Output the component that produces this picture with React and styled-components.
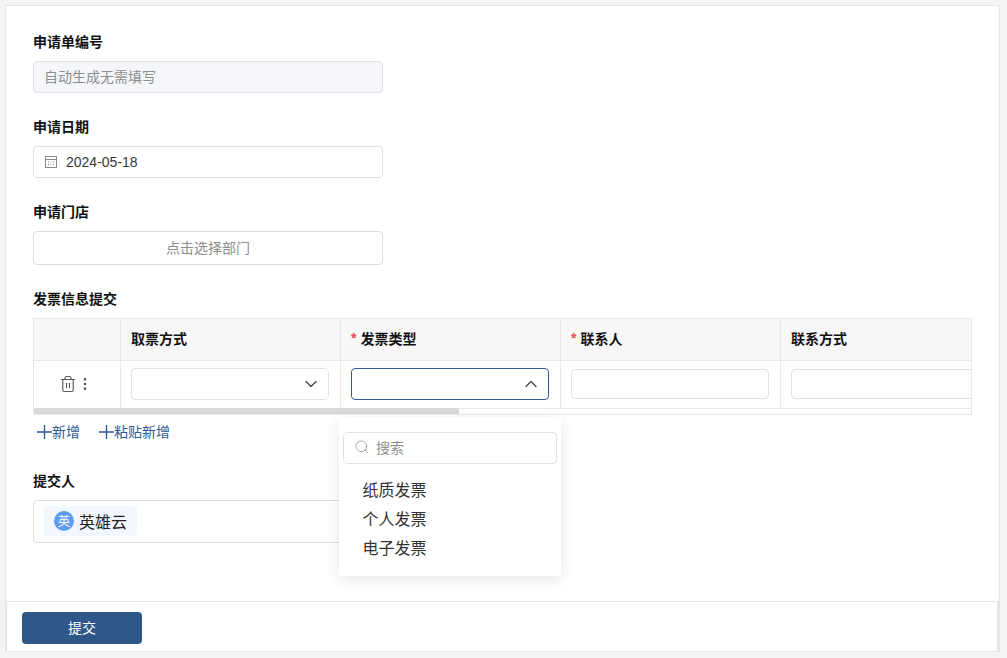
import React from "react";
import styled, { createGlobalStyle } from "styled-components";
import { Trash2, ChevronDown, ChevronUp, Search, EllipsisVertical } from "lucide-react";

const Global = createGlobalStyle`
  html, body { margin: 0; padding: 0; height: 100%; background: #f4f4f7; }
  body { font-family: "Liberation Sans", "Noto Sans CJK SC", sans-serif; color: #111; overflow: hidden; }
  * { box-sizing: border-box; }
`;
const Page = styled.div`
  width: 1007px; height: 658px; padding: 5px 7px 6px 5px;
`;
const Card = styled.div`
  position: relative; height: 647px; background: #fff; border: 1px solid #e6e6e8;
  display: flex; flex-direction: column;
`;
const Body = styled.div`
  flex: 1; padding: 26px 27px 0 27px; min-height: 0;
`;
const Field = styled.div`
  margin-bottom: ${p => p.$mb ?? 24}px;
`;
const Label = styled.div`
  font-size: 14px; font-weight: 600; line-height: 20px; margin-bottom: 9px; color: #111;
`;
const Input = styled.div`
  width: 350px; height: 32px; border: 1px solid #e0e0e8; border-radius: 4px;
  display: flex; align-items: center; padding: 0 10px; font-size: 14px;
  background: ${p => (p.$disabled ? "#f5f6fa" : "#fff")};
  color: ${p => (p.$disabled ? "#8e8e8e" : "#333")};
  ${p => p.$disabled && "padding-bottom: 2px;"}
`;
const DateText = styled.span` margin-left: 8px; color: #383838; `;
const PickButton = styled.div`
  width: 350px; height: 34px; border: 1px solid #dcdce0; border-radius: 4px; padding-bottom: 2px;
  display: flex; align-items: center; justify-content: center; font-size: 14px; color: #8c8c8c;
`;
const TableWrap = styled.div`
  width: 939px; height: 97px; border: 1px solid #e8e8ea; overflow: hidden; position: relative;
`;
const Row = styled.div`
  display: flex; height: ${p => p.$h}px; background: ${p => p.$bg || "#fff"};
  border-bottom: 1px solid #e8e8ea;
`;
const Cell = styled.div`
  flex: 0 0 ${p => p.$w}px; border-right: 1px solid #e8e8ea; padding: 0 11px ${p => (p.$head ? 4 : 2)}px 10px;
  display: flex; align-items: center; font-size: 14px; font-weight: ${p => (p.$head ? 600 : 400)};
  justify-content: ${p => (p.$center ? "center" : "flex-start")}; color: #5c5c5c;
  ${p => p.$head && "color: #111;"}
  ${p => p.$last && "border-right: none; overflow: hidden;"}
`;
const Star = styled.span` color: #e5484d; margin-right: 4px; `;
const IconGroup = styled.div` display: flex; align-items: center; margin-left: -2px; `;
const CellInput = styled.div`
  flex: 1; height: ${p => (p.$tall ? 32 : 30)}px;
  border: 1px solid ${p => (p.$active ? "#2f5a92" : "#e0e0e6")};
  border-radius: 4px; display: flex; align-items: center; justify-content: flex-end; padding-right: 7px;
  color: #444; background: #fff; ${p => p.$wide && "flex: 0 0 220px;"}
`;
const Track = styled.div`
  position: absolute; left: 0; bottom: 0; width: 425px; height: 6px; background: #d9d9d9;
`;
const Actions = styled.div`
  display: flex; gap: 18px; padding: 7px 0 0 3px; height: 44px; margin-bottom: 12px;
  font-size: 14px; color: #2f5a92;
`;
const AddAction = styled.div` display: flex; align-items: center; height: 20px; line-height: 20px; `;
const PersonBox = styled.div`
  width: 350px; height: 43px; border: 1px solid #dedee0; border-radius: 4px;
  display: flex; align-items: center; padding: 0 0 2px 10px;
`;
const Chip = styled.div`
  display: flex; align-items: center; height: 30px; padding: 0 10px; background: #f2f6fe; border-radius: 4px;
  font-size: 16px; color: #222;
`;
const Avatar = styled.span`
  width: 20px; height: 20px; border-radius: 50%; background: #5e9cf2; color: #fff; font-size: 12.5px;
  display: flex; align-items: center; justify-content: center; margin-right: 5px;
`;
const Footer = styled.div`
  height: 50px; border: 1px solid #e4e4e6; border-right-width: 2px; border-bottom: 0;
  padding: 10px 0 0 15px;
`;
const SubmitButton = styled.button`
  width: 120px; height: 32px; background: #2f5789; border: none; border-radius: 4px; color: #fff;
  font-family: inherit; font-size: 14px; padding: 0 0 2px;
`;
const Dropdown = styled.div`
  position: absolute; left: 333px; top: 411px; width: 222px; height: 159px; background: #fff;
  box-shadow: 0 4px 14px rgba(0,0,0,.1); padding: 15px 4px 0 4px; z-index: 5;
`;
const SearchBox = styled.div`
  height: 32px; border: 1px solid #e0e0e8; border-radius: 4px; display: flex; align-items: center;
  padding: 0 0 2px 10px; gap: 6px; font-size: 14px; color: #8f8f8f;
`;
const Options = styled.div` padding: 12px 0 0 20px; `;
const Option = styled.div` height: 29px; line-height: 29px; font-size: 16px; color: #333; margin-left: -0.5px; `;

const Calendar = () => (
  <svg width="14" height="14" viewBox="0 0 14 14" fill="none" stroke="#8a8a8a" strokeWidth="1">
    <rect x="1.5" y="1.5" width="11" height="11" />
    <path d="M1.5 4.5h11" />
    <path d="M4 7h1M6.5 7h1M9 7h1M4 9.5h1M6.5 9.5h1M9 9.5h1" />
  </svg>
);

const PlusMark = () => (
  <svg width="16" height="16" viewBox="0 0 16 16" fill="none" stroke="#2f5a92" strokeWidth="1.4">
    <path d="M1 8h15M8.5 1v14" />
  </svg>
);

export default function App() {
  return (
    <Page>
      <Global />
      <Card>
        <Body>
          <Field>
            <Label>申请单编号</Label>
            <Input $disabled>自动生成无需填写</Input>
          </Field>
          <Field>
            <Label>申请日期</Label>
            <Input><Calendar /><DateText>2024-05-18</DateText></Input>
          </Field>
          <Field>
            <Label>申请门店</Label>
            <PickButton>点击选择部门</PickButton>
          </Field>
          <Field $mb={0}>
            <Label>发票信息提交</Label>
            <TableWrap>
              <Row $h={42} $bg="#f7f7f8">
                <Cell $w={87} $head />
                <Cell $w={220} $head>取票方式</Cell>
                <Cell $w={220} $head><Star>*</Star>发票类型</Cell>
                <Cell $w={220} $head><Star>*</Star>联系人</Cell>
                <Cell $w={190} $head $last>联系方式</Cell>
              </Row>
              <Row $h={48}>
                <Cell $w={87} $center>
                  <IconGroup>
                    <Trash2 size={18} strokeWidth={1.6} />
                    <EllipsisVertical size={16} strokeWidth={2} />
                  </IconGroup>
                </Cell>
                <Cell $w={220}><CellInput $tall><ChevronDown size={20} strokeWidth={1.5} /></CellInput></Cell>
                <Cell $w={220}><CellInput $tall $active><ChevronUp size={20} strokeWidth={1.5} /></CellInput></Cell>
                <Cell $w={220}><CellInput /></Cell>
                <Cell $w={190} $last><CellInput $wide /></Cell>
              </Row>
              <Track />
            </TableWrap>
          </Field>
          <Actions>
            <AddAction><PlusMark />新增</AddAction>
            <AddAction><PlusMark />粘贴新增</AddAction>
          </Actions>
          <Field $mb={0}>
            <Label>提交人</Label>
            <PersonBox><Chip><Avatar>英</Avatar>英雄云</Chip></PersonBox>
          </Field>
        </Body>
        <Footer><SubmitButton>提交</SubmitButton></Footer>
        <Dropdown>
          <SearchBox><Search size={16} strokeWidth={1.2} />搜索</SearchBox>
          <Options>
            <Option>纸质发票</Option>
            <Option>个人发票</Option>
            <Option>电子发票</Option>
          </Options>
        </Dropdown>
      </Card>
    </Page>
  );
}
